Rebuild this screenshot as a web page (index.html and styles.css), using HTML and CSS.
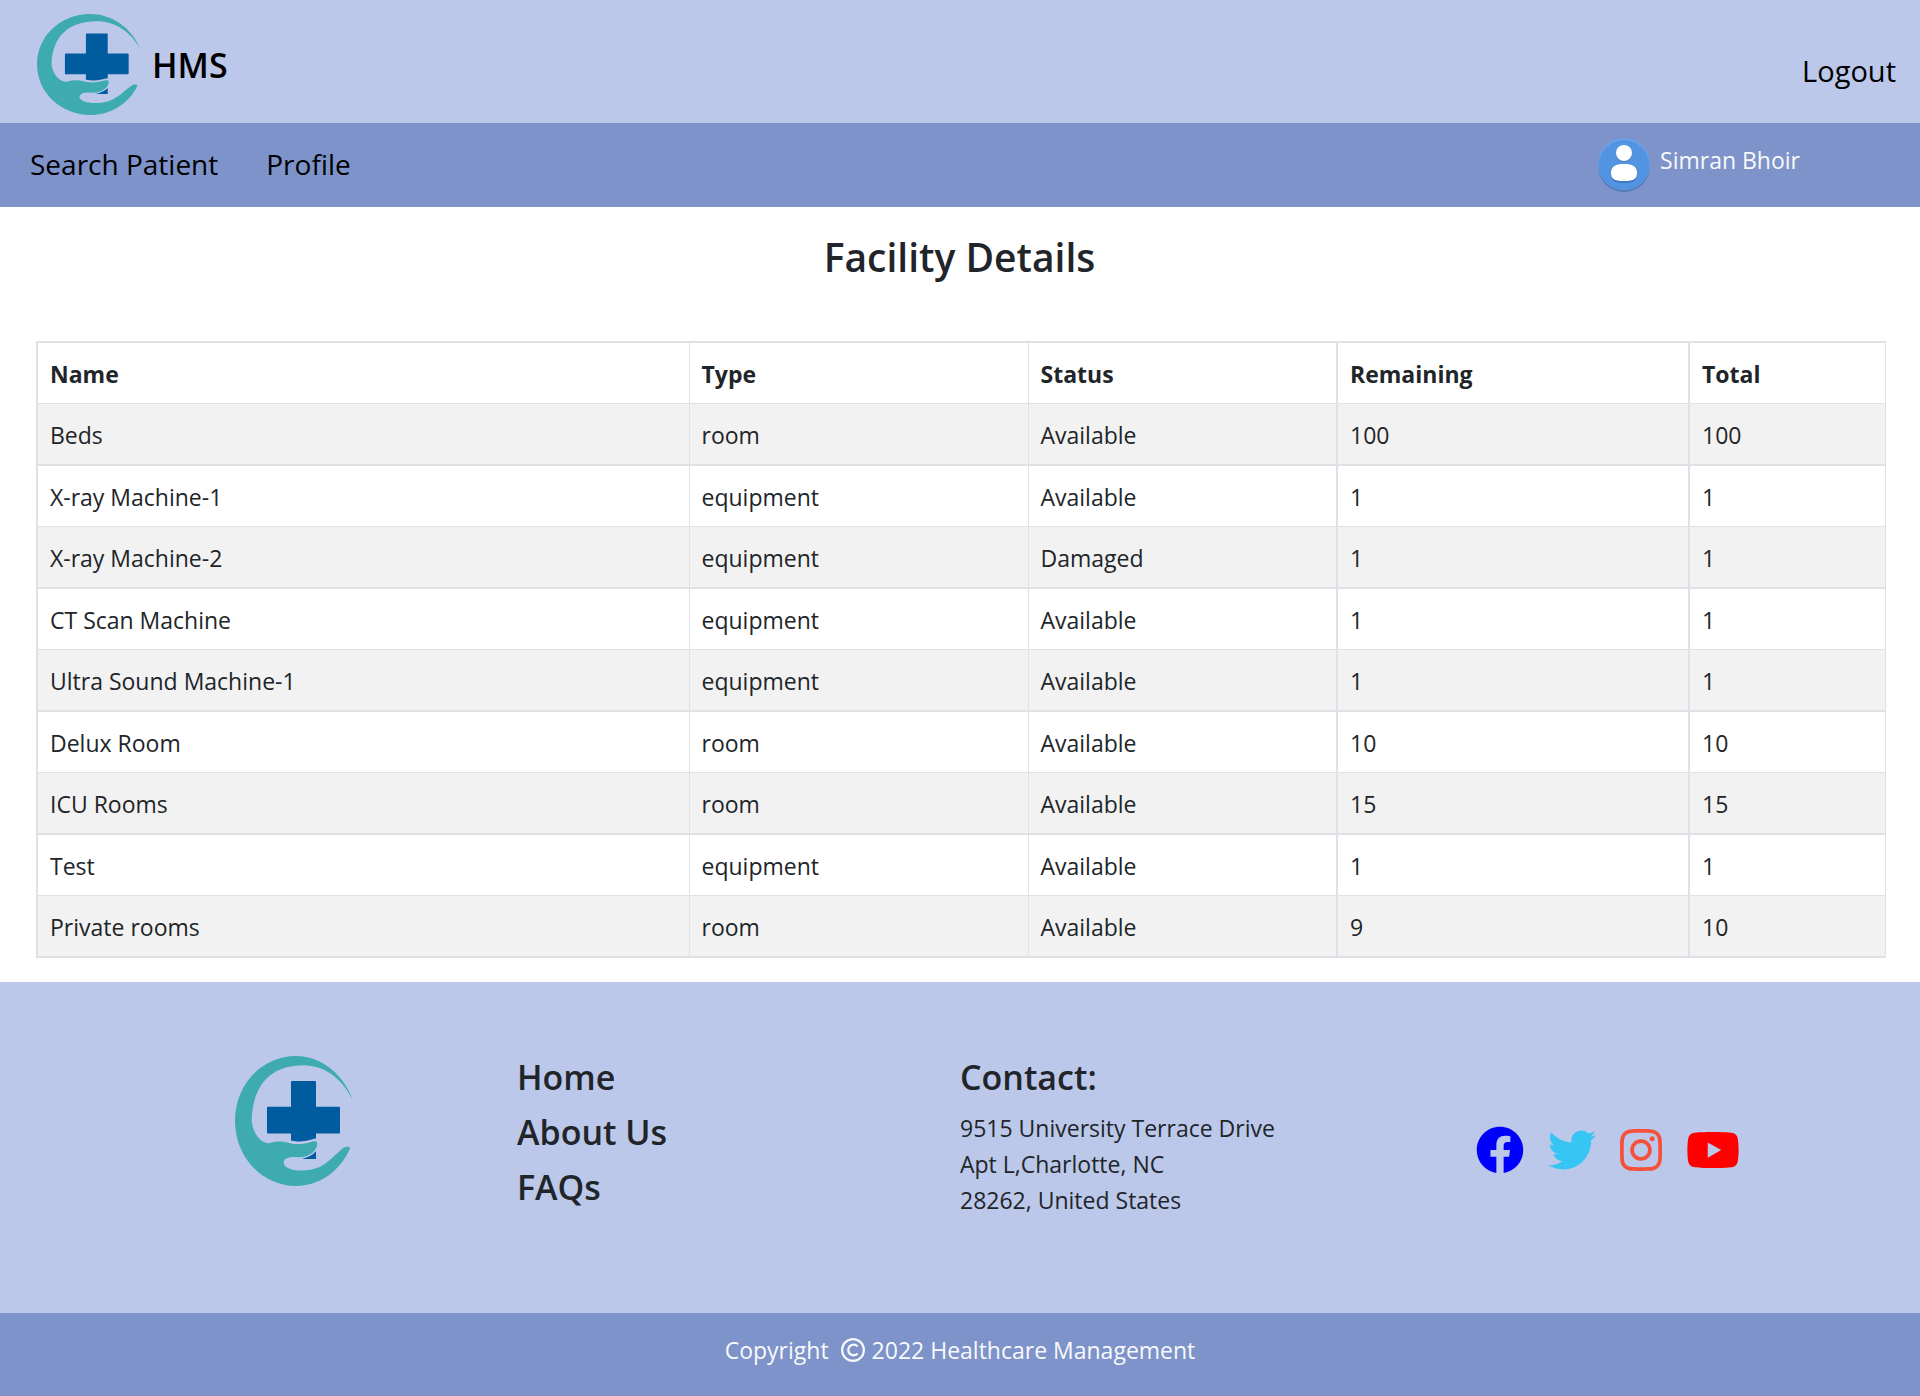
FILE: index.html
```html
<!DOCTYPE html>
<html lang="en">
<head>
<meta charset="utf-8">
<meta name="viewport" content="width=device-width, initial-scale=1">
<title>HMS - Facility Details</title>
<link rel="stylesheet" href="styles.css">
</head>
<body>
<svg class="defs" aria-hidden="true">
  <symbol id="logo" viewBox="75 79 354 389" preserveAspectRatio="none">
    <path fill="#3dabb0" d="M429 213C400 130 330 79 258 79C155 79 75 165 75 273C75 385 160 468 258 468C325 468 388 428 420 356C420 349 410 349 402 353C375 373 360 397 325 413C290 428 222 425 221 398C222 385 240 380 265 382C300 383 322 360 322 340C320 331 308 334 300 337C285 342 265 345 240 340C220 333 200 333 180 339C150 346 125 300 125 270C128 170 180 107 280 107C345 107 398 148 429 213Z"/>
    <path fill="#015c9f" d="M246 154H315Q318 154 318 157V231H387Q390 231 390 234V308Q390 311 387 311H318V326C300 329 280 340 243 332V311H174Q171 311 171 308V234Q171 231 174 231H243V157Q243 154 246 154ZM318 364V387H276Q304 380 318 364Z"/>
  </symbol>
</svg>

<header class="topbar">
  <a class="brand" href="#">
    <svg class="brand-logo" aria-hidden="true"><use href="#logo"/></svg>
    <span>HMS</span>
  </a>
  <a class="logout" href="#">Logout</a>
</header>

<nav class="navbar">
  <div class="nav-links">
    <a href="#">Search Patient</a>
    <a href="#">Profile</a>
  </div>
  <div class="user">
    <svg class="avatar" viewBox="0 0 52 54" aria-hidden="true">
      <circle cx="26" cy="28" r="26" fill="#5579b5"/>
      <circle cx="26" cy="26" r="26" fill="#68a2e9"/>
      <circle cx="26" cy="27" r="25" fill="#5294e2"/>
      <path fill="#3f78bd" d="M13 36C13 28 18 27 26 27S39 28 39 36S34 45 26 45S13 44 13 36Z"/>
      <circle cx="26" cy="16" r="8" fill="#3f78bd"/>
      <circle cx="26" cy="15" r="8" fill="#fff"/>
      <path fill="#fff" d="M13 35C13 28 18 26 26 26S39 28 39 35S34 43 26 43S13 42 13 35Z"/>
    </svg>
    <span>Simran Bhoir</span>
  </div>
</nav>

<main class="content">
  <h1>Facility Details</h1>
  <table class="facilities">
    <colgroup>
      <col class="col-name"><col class="col-type"><col class="col-status"><col class="col-remaining"><col class="col-total">
    </colgroup>
    <thead>
      <tr><th>Name</th><th>Type</th><th>Status</th><th>Remaining</th><th>Total</th></tr>
    </thead>
    <tbody>
      <tr><td>Beds</td><td>room</td><td>Available</td><td>100</td><td>100</td></tr>
      <tr><td>X-ray Machine-1</td><td>equipment</td><td>Available</td><td>1</td><td>1</td></tr>
      <tr><td>X-ray Machine-2</td><td>equipment</td><td>Damaged</td><td>1</td><td>1</td></tr>
      <tr><td>CT Scan Machine</td><td>equipment</td><td>Available</td><td>1</td><td>1</td></tr>
      <tr><td>Ultra Sound Machine-1</td><td>equipment</td><td>Available</td><td>1</td><td>1</td></tr>
      <tr><td>Delux Room</td><td>room</td><td>Available</td><td>10</td><td>10</td></tr>
      <tr><td>ICU Rooms</td><td>room</td><td>Available</td><td>15</td><td>15</td></tr>
      <tr><td>Test</td><td>equipment</td><td>Available</td><td>1</td><td>1</td></tr>
      <tr><td>Private rooms</td><td>room</td><td>Available</td><td>9</td><td>10</td></tr>
    </tbody>
  </table>
</main>

<footer>
  <div class="footer-main">
    <svg class="footer-logo" aria-hidden="true"><use href="#logo"/></svg>
    <div class="footer-links">
      <a href="#">Home</a>
      <a href="#">About Us</a>
      <a href="#">FAQs</a>
    </div>
    <div class="contact">
      <h2>Contact:</h2>
      <address>9515 University Terrace Drive<br>Apt L,Charlotte, NC<br>28262, United States</address>
    </div>
    <div class="social">
      <a href="#" aria-label="Facebook"><svg class="facebook" viewBox="0 0 512 512"><path d="M504 256C504 119 393 8 256 8S8 119 8 256c0 123.78 90.69 226.38 209.25 245V327.69h-63V256h63v-54.64c0-62.15 37-96.48 93.67-96.48 27.14 0 55.52 4.84 55.52 4.84v61h-31.28c-30.8 0-40.41 19.12-40.41 38.73V256h68.78l-11 71.69h-57.78V501C413.31 482.38 504 379.78 504 256z"/></svg></a>
      <a href="#" aria-label="Twitter"><svg class="twitter" viewBox="0 0 512 512"><path d="M459.37 151.716c.325 4.548.325 9.097.325 13.645 0 138.72-105.583 298.558-298.558 298.558-59.452 0-114.68-17.219-161.137-47.106 8.447.974 16.568 1.299 25.34 1.299 49.055 0 94.213-16.568 130.274-44.832-46.132-.975-84.792-31.188-98.112-72.772 6.498.974 12.995 1.624 19.818 1.624 9.421 0 18.843-1.3 27.614-3.573-48.081-9.747-84.143-51.98-84.143-102.985v-1.299c13.969 7.797 30.214 12.67 47.431 13.319-28.264-18.843-46.781-51.005-46.781-87.391 0-19.492 5.197-37.36 14.294-52.954 51.655 63.675 129.3 105.258 216.365 109.807-1.624-7.797-2.599-15.918-2.599-24.04 0-57.828 46.782-104.934 104.934-104.934 30.213 0 57.502 12.67 76.67 33.137 23.715-4.548 46.456-13.32 66.599-25.34-7.798 24.366-24.366 44.833-46.132 57.827 21.117-2.273 41.584-8.122 60.426-16.243-14.292 20.791-32.161 39.308-52.628 54.253z"/></svg></a>
      <a href="#" aria-label="Instagram"><svg class="instagram" viewBox="0 0 448 512"><path d="M224.1 141c-63.6 0-114.9 51.3-114.9 114.9s51.3 114.9 114.9 114.9S339 319.500 339 255.900 287.700 141 224.100 141zm0 189.600c-41.100 0-74.700-33.500-74.700-74.700s33.500-74.700 74.700-74.700 74.700 33.500 74.700 74.700-33.600 74.700-74.700 74.700zm146.400-194.300c0 14.900-12 26.800-26.800 26.800-14.900 0-26.800-12-26.800-26.800s12-26.800 26.800-26.800 26.800 12 26.800 26.800zm76.100 27.200c-1.700-35.900-9.900-67.700-36.200-93.900-26.200-26.200-58-34.400-93.900-36.200-37-2.100-147.900-2.100-184.900 0-35.800 1.700-67.600 9.900-93.900 36.100s-34.400 58-36.200 93.900c-2.100 37-2.100 147.900 0 184.900 1.700 35.900 9.900 67.700 36.200 93.900s58 34.400 93.900 36.200c37 2.100 147.900 2.100 184.900 0 35.900-1.700 67.700-9.900 93.900-36.200 26.200-26.200 34.400-58 36.200-93.900 2.100-37 2.100-147.800 0-184.800zM398.800 388c-7.800 19.600-22.900 34.700-42.600 42.600-29.500 11.700-99.500 9-132.100 9s-102.700 2.600-132.100-9c-19.600-7.800-34.700-22.900-42.600-42.600-11.700-29.500-9-99.500-9-132.100s-2.600-102.700 9-132.100c7.800-19.600 22.900-34.700 42.600-42.600 29.500-11.700 99.500-9 132.100-9s102.700-2.600 132.100 9c19.600 7.800 34.700 22.900 42.600 42.600 11.700 29.500 9 99.500 9 132.100s2.700 102.700-9 132.100z"/></svg></a>
      <a href="#" aria-label="YouTube"><svg class="youtube" viewBox="0 0 576 512"><path d="M549.655 124.083c-6.281-23.650-24.787-42.276-48.284-48.597C458.781 64 288 64 288 64S117.220 64 74.629 75.486c-23.497 6.322-42.003 24.947-48.284 48.597-11.412 42.867-11.412 132.305-11.412 132.305s0 89.438 11.412 132.305c6.281 23.650 24.787 41.500 48.284 47.821C117.220 448 288 448 288 448s170.780 0 213.371-11.486c23.497-6.321 42.003-24.171 48.284-47.821 11.412-42.867 11.412-132.305 11.412-132.305s0-89.438-11.412-132.305zm-317.510 213.508V175.185l142.739 81.205-142.739 81.201z"/></svg></a>
    </div>
  </div>
  <div class="copyright">
    <span>Copyright</span>
    <svg viewBox="0 0 24 24" aria-hidden="true" fill="none" stroke="currentColor"><circle cx="12" cy="12" r="10.900" stroke-width="2.200"/><path stroke-width="2.300" d="M16.600 15.400A5.300 5.300 0 1 1 16.500 8.400"/></svg>
    <span>2022 Healthcare Management</span>
  </div>
</footer>
</body>
</html>
```
FILE: styles.css
```css
* { box-sizing: border-box; }

body {
  margin: 0;
  font-family: "Segoe UI", "Open Sans", "Noto Sans", sans-serif;
  font-size: 23px;
  line-height: 36px;
  color: #212529;
  background: #fff;
}

a { color: inherit; text-decoration: none; }
svg { display: block; flex: none; }
.defs { position: absolute; width: 0; height: 0; }

.topbar {
  display: flex;
  justify-content: space-between;
  align-items: center;
  padding: 14px 24px 8px 37px;
  background: #bbc8ea;
  color: #000;
}
.brand {
  display: flex;
  align-items: center;
  gap: 12px;
  font-size: 34px;
  font-weight: 600;
}
.brand-logo { width: 103px; height: 101px; }
.logout { font-size: 29px; padding-top: 12px; }

.navbar {
  display: flex;
  justify-content: space-between;
  align-items: center;
  min-height: 84px;
  padding: 0 120px 0 30px;
  background: #7e93ca;
}
.nav-links {
  display: flex;
  gap: 48px;
  padding-bottom: 2px;
  font-size: 28px;
  color: #000;
}
.user {
  display: flex;
  align-items: center;
  gap: 10px;
  color: #f8f9fa;
}
.user span { padding-bottom: 10px; }
.avatar { width: 52px; height: 54px; }

.content { padding: 24px 37px 24px 36px; }
h1, h2 { margin: 0; font-weight: 600; }
h1 {
  font-size: 39px;
  line-height: 52px;
  text-align: center;
}

.facilities {
  width: 100%;
  margin-top: 58px;
  table-layout: fixed;
  border-collapse: collapse;
  border: 2px solid #dee2e6;
  border-right-width: 1px;
}
.col-name { width: 652px; }
.col-type { width: 339px; }
.col-status { width: 309px; }
.col-remaining { width: 352px; }
.col-total { width: 196px; }
.facilities th,
.facilities td {
  padding: 13px 12px 11px;
  text-align: left;
  vertical-align: top;
  border: 1px solid #dee2e6;
}
.facilities th { font-weight: 700; }
.facilities tr { height: 61px; }
.facilities tbody tr:nth-child(odd) { background: #f2f2f2; }
.facilities tbody tr:nth-child(odd) td { border-bottom-width: 2px; }
.facilities tr > :nth-child(n+4) { border-left-width: 2px; }

.footer-main {
  display: grid;
  grid-template-columns: 282fr 443fr 516fr 444fr;
  align-items: start;
  min-height: 331px;
  padding: 74px 0 74px 235px;
  background: #bbc8ea;
}
.footer-logo { width: 118px; height: 130px; }
.footer-links {
  display: flex;
  flex-direction: column;
  gap: 13px;
  font-size: 34px;
  font-weight: 600;
  line-height: 42px;
}
.contact h2 {
  font-size: 34px;
  line-height: 42px;
  margin-bottom: 12px;
}
address { font-style: normal; }
.social {
  display: flex;
  gap: 24px;
  padding-top: 70px;
}
.social svg { height: 48px; fill: currentColor; }
.facebook { color: #00f; }
.twitter { color: #37c5f3; }
.instagram { color: #f6503a; }
.youtube { color: #f00; }

.copyright {
  display: flex;
  justify-content: center;
  align-items: center;
  min-height: 83px;
  padding-bottom: 10px;
  background: #7e93ca;
  color: #f8f9fa;
}
.copyright svg { width: 24px; height: 24px; margin: 0 7px 0 12px; }
```
